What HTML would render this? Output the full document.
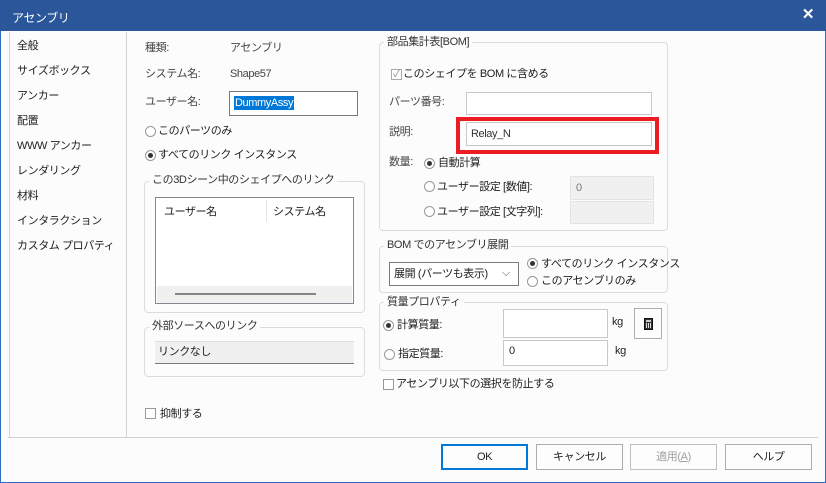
<!DOCTYPE html>
<html><head><meta charset="utf-8"><style>
*{box-sizing:border-box;margin:0;padding:0}
body{width:826px;height:483px;background:#fcfcfc;font-family:"Liberation Sans","Noto Sans CJK JP",sans-serif;font-size:11px;letter-spacing:-0.4px;color:#1e1e1e;position:relative;overflow:hidden}
.frame{position:absolute;left:0;top:0;width:826px;height:483px;border:1px solid #2b6cc4}
.a{position:absolute;white-space:nowrap;line-height:14px}
.title{position:absolute;left:0;top:0;width:826px;height:31px;background:#2b579a;color:#fff;font-size:12px;padding:9px 0 0 12px}
.x{position:absolute;right:12px;top:5px;color:#fff;font-size:15px;font-weight:bold}
.box{position:absolute;border:1px solid #d4d4d4}
.grp{position:absolute;border:1px solid #dcdcdc;border-radius:4px}
.lg{position:absolute;background:#fcfcfc;padding:0 3px;white-space:nowrap;line-height:14px;color:#333}
.in{position:absolute;background:#fff;border:1px solid #c8c8c8}
.rb{position:absolute;width:11px;height:11px;border:1px solid #999;border-radius:50%;background:#fff}
.rb.on::after{content:"";position:absolute;left:2px;top:2px;width:5px;height:5px;border-radius:50%;background:#333}
.cb{position:absolute;width:11px;height:11px;border:1px solid #999;background:#fff}
.btn{position:absolute;top:444px;width:87px;height:26px;border:1px solid #adadad;background:#fdfdfd;text-align:center;line-height:24px}
.list div{position:absolute;left:17px}
</style></head><body>
<div class="frame"></div>
<div class="title">アセンブリ<span class="x">✕</span></div>
<div class="box" style="left:9px;top:32px;width:118px;height:406px;border-top:none;border-bottom:none"></div>
<div class="list">
<div class="a" style="top:39px">全般</div>
<div class="a" style="top:64px">サイズボックス</div>
<div class="a" style="top:89px">アンカー</div>
<div class="a" style="top:114px">配置</div>
<div class="a" style="top:139px">WWW アンカー</div>
<div class="a" style="top:164px">レンダリング</div>
<div class="a" style="top:189px">材料</div>
<div class="a" style="top:214px">インタラクション</div>
<div class="a" style="top:239px">カスタム プロパティ</div>
</div>
<div style="position:absolute;left:8px;top:437px;width:810px;height:1px;background:#d0d0d0"></div>

<div class="a" style="left:145px;top:41px;color:#444">種類:</div>
<div class="a" style="left:230px;top:41px;color:#444">アセンブリ</div>
<div class="a" style="left:145px;top:67px;color:#444">システム名:</div>
<div class="a" style="left:230px;top:67px;color:#444">Shape57</div>
<div class="a" style="left:145px;top:95px;color:#444">ユーザー名:</div>
<div class="in" style="left:229px;top:91px;width:129px;height:25px;border-color:#7a7a7a"><span style="position:absolute;left:4px;top:4px;background:#0078d7;color:#fff;line-height:14px;padding:0 1px">DummyAssy</span></div>
<div class="rb" style="left:145px;top:126px"></div><div class="a" style="left:158px;top:124px">このパーツのみ</div>
<div class="rb on" style="left:145px;top:150px"></div><div class="a" style="left:158px;top:148px">すべてのリンク インスタンス</div>

<div class="grp" style="left:144px;top:181px;width:221px;height:132px"></div>
<div class="lg" style="left:149px;top:173px">この3Dシーン中のシェイプへのリンク</div>
<div class="in" style="left:155px;top:197px;width:199px;height:107px;border-color:#828790">
<div class="a" style="left:8px;top:7px">ユーザー名</div>
<div style="position:absolute;left:110px;top:2px;width:1px;height:22px;background:#e5e5e5"></div>
<div class="a" style="left:117px;top:7px">システム名</div>
<div style="position:absolute;left:1px;top:88px;width:195px;height:17px;background:#f0f0f0"><div style="position:absolute;left:18px;top:7px;width:141px;height:2px;background:#858585"></div></div>
</div>

<div class="grp" style="left:144px;top:327px;width:221px;height:50px"></div>
<div class="lg" style="left:149px;top:319px">外部ソースへのリンク</div>
<div style="position:absolute;left:155px;top:341px;width:199px;height:23px;background:#f0f0f0;border-bottom:1px solid #7a7a7a;border-top:1px solid #e0e0e0"><span class="a" style="left:3px;top:3px">リンクなし</span></div>

<div class="cb" style="left:145px;top:408px"></div><div class="a" style="left:160px;top:407px">抑制する</div>

<div class="grp" style="left:379px;top:42px;width:289px;height:189px"></div>
<div class="lg" style="left:384px;top:35px">部品集計表[BOM]</div>
<div class="cb" style="left:391px;top:69px;border-color:#aaa;color:#888;font-size:10px;line-height:9px;text-align:center">✓</div>
<div class="a" style="left:403px;top:67px">このシェイプを BOM に含める</div>
<div class="a" style="left:389px;top:95px;color:#444">パーツ番号:</div>
<div class="in" style="left:466px;top:92px;width:186px;height:23px"></div>
<div class="a" style="left:389px;top:125px;color:#444">説明:</div>
<div style="position:absolute;left:456px;top:117px;width:203px;height:37px;border:4px solid #ec1c24"></div>
<div class="in" style="left:466px;top:122px;width:186px;height:24px"><span class="a" style="left:4px;top:4px;color:#333">Relay_N</span></div>
<div class="a" style="left:389px;top:155px;color:#444">数量:</div>
<div class="rb on" style="left:424px;top:158px"></div><div class="a" style="left:438px;top:156px">自動計算</div>
<div class="rb" style="left:424px;top:181px"></div><div class="a" style="left:437px;top:180px">ユーザー設定 [数値]:</div>
<div style="position:absolute;left:570px;top:176px;width:84px;height:24px;background:#f0f0f0;border:1px solid #e3e3e3"><span class="a" style="left:5px;top:4px;color:#777">0</span></div>
<div class="rb" style="left:424px;top:206px"></div><div class="a" style="left:437px;top:205px">ユーザー設定 [文字列]:</div>
<div style="position:absolute;left:570px;top:201px;width:84px;height:23px;background:#f0f0f0;border:1px solid #e3e3e3"></div>

<div class="grp" style="left:379px;top:246px;width:289px;height:47px"></div>
<div class="lg" style="left:384px;top:238px">BOM でのアセンブリ展開</div>
<div style="position:absolute;left:389px;top:262px;width:130px;height:24px;background:#fff;border:1px solid #7a7a7a"><span class="a" style="left:4px;top:4px">展開 (パーツも表示)</span><span class="a" style="left:112px;top:3px;color:#555">⌵</span></div>
<div class="rb on" style="left:527px;top:258px"></div><div class="a" style="left:541px;top:257px">すべてのリンク インスタンス</div>
<div class="rb" style="left:527px;top:276px"></div><div class="a" style="left:541px;top:274px">このアセンブリのみ</div>

<div class="grp" style="left:379px;top:302px;width:289px;height:69px"></div>
<div class="lg" style="left:384px;top:295px">質量プロパティ</div>
<div class="rb on" style="left:383px;top:320px"></div><div class="a" style="left:397px;top:318px">計算質量:</div>
<div class="in" style="left:503px;top:309px;width:105px;height:29px"></div>
<div class="a" style="left:612px;top:315px;font-size:11px">kg</div>
<div style="position:absolute;left:634px;top:308px;width:28px;height:31px;border:1px solid #adadad;background:#fdfdfd"><div style="position:absolute;left:9px;top:9px;width:9px;height:12px;background:#333;border:1px solid #111"><div style="position:absolute;left:1px;top:1px;width:5px;height:2px;background:#ccc"></div><div style="position:absolute;left:1px;top:4px;width:5px;height:5px;background:repeating-linear-gradient(90deg,#ddd 0 1px,#333 1px 2px)"></div></div></div>
<div class="rb" style="left:384px;top:349px"></div><div class="a" style="left:398px;top:347px">指定質量:</div>
<div class="in" style="left:503px;top:340px;width:105px;height:26px"><span class="a" style="left:5px;top:3px">0</span></div>
<div class="a" style="left:615px;top:344px;font-size:11px">kg</div>

<div class="cb" style="left:383px;top:379px"></div><div class="a" style="left:396px;top:377px">アセンブリ以下の選択を防止する</div>

<div class="btn" style="left:441px;border:2px solid #0078d7;line-height:22px">OK</div>
<div class="btn" style="left:536px">キャンセル</div>
<div class="btn" style="left:630px;color:#a0a0a0;border-color:#bfbfbf">適用(<u>A</u>)</div>
<div class="btn" style="left:725px">ヘルプ</div>
</body></html>
